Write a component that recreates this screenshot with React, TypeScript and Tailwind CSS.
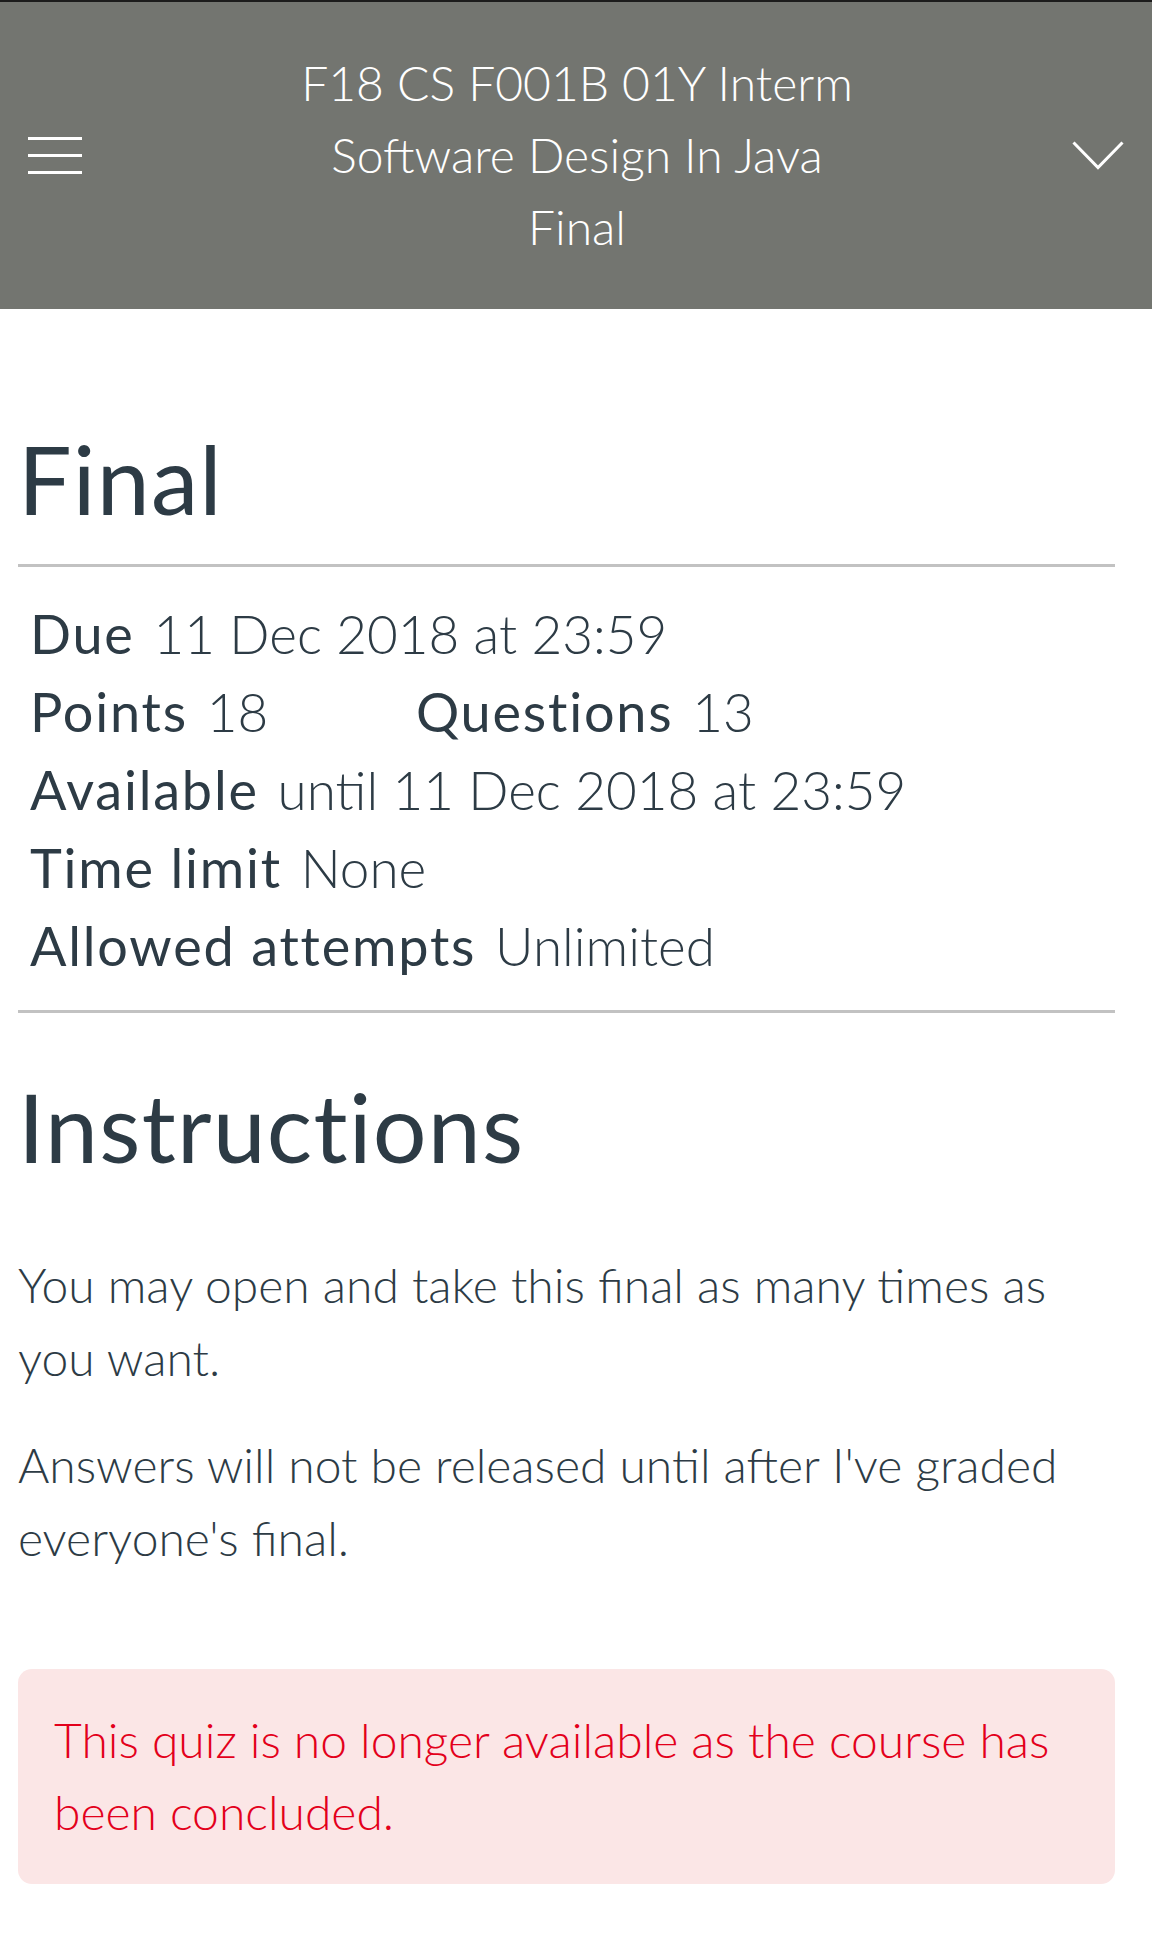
import React from "react";

const Row = ({ children }: { children: React.ReactNode }) => (
  <div className="leading-[78px] h-[78px] whitespace-nowrap">{children}</div>
);

const L = ({ children }: { children: React.ReactNode }) => (
  <span className="font-normal text-[54px] tracking-[1.8px] mr-[5px]">{children}</span>
);

const V = ({ children }: { children: React.ReactNode }) => (
  <span className="font-light text-[53px]">{children}</span>
);

export default function App() {
  return (
    <div
      className="w-[1152px] min-h-[1958px] bg-white text-[#2d3b45]"
      style={{ fontFamily: "Lato, 'Open Sans', sans-serif" }}
    >
      <header className="h-[309px] border-t-2 border-[#1c1c1c] bg-[#737570] flex items-center px-[28px]">
        <div className="flex flex-col gap-[14px] w-[54px]">
          <div className="h-[3px] w-[54px] bg-white" />
          <div className="h-[3px] w-[54px] bg-white" />
          <div className="h-[3px] w-[54px] bg-white" />
        </div>
        <div className="flex-1 text-center text-white font-light text-[48px] leading-[72px] -mt-[1px]">
          <div>F18 CS F001B 01Y Interm</div>
          <div>Software Design In Java</div>
          <div>Final</div>
        </div>
        <svg width="52" height="29" viewBox="0 0 52 29" className="block">
          <polyline
            points="1.5,1.5 26,26.5 50.5,1.5"
            fill="none"
            stroke="white"
            strokeWidth="3"
          />
        </svg>
      </header>

      <main className="pl-[18px] pr-[37px]">
        <h1 className="mt-[117px] text-[95px] tracking-[1.2px] leading-[105.6px] font-normal">Final</h1>
        <div className="mt-[32px] h-[3px] bg-[#c2c2c2]" />

        <div className="mt-[28px] pl-[12px] text-[54px]">
          <Row>
            <L>Due</L> <V>11 Dec 2018 at 23:59</V>
          </Row>
          <Row>
            <span className="inline-block w-[386px]">
              <L>Points</L> <V>18</V>
            </span>
            <L>Questions</L> <V>13</V>
          </Row>
          <Row>
            <L>Available</L> <V>until 11 Dec 2018 at 23:59</V>
          </Row>
          <Row>
            <L>Time limit</L> <V>None</V>
          </Row>
          <Row>
            <L>Allowed attempts</L> <V>Unlimited</V>
          </Row>
        </div>

        <div className="mt-[25px] h-[3px] bg-[#c2c2c2]" />

        <h2 className="mt-[61px] text-[95px] tracking-[1.2px] leading-[105.6px] font-normal">Instructions</h2>

        <div className="text-[48px] leading-[73px] font-light">
          <p className="mt-[69px]">You may open and take this final as many times as you want.</p>
          <p className="mt-[34px]">Answers will not be released until after I've graded everyone's final.</p>
        </div>

        <div className="mt-[95px] rounded-[14px] bg-[#fbe6e6] pl-[36px] pr-[30px] pt-[35px] pb-[36px] text-[48px] leading-[72px] font-light text-[#e3001b]">
          This quiz is no longer available as the course has been concluded.
        </div>
      </main>
    </div>
  );
}
